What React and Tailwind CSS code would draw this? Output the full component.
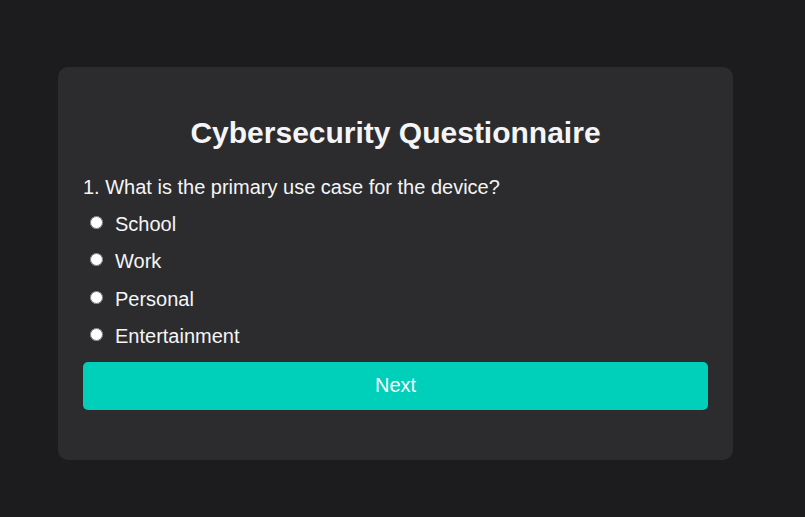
const options = ["School", "Work", "Personal", "Entertainment"];

export default function App() {
  return (
    <div
      className="min-h-screen bg-[#1c1c1e] pt-[67px] pl-[58px]"
      style={{ fontFamily: '"Liberation Sans", Arial, sans-serif' }}
    >
      <div className="w-[675px] rounded-[10px] bg-[#2c2c2e] px-[25px] pt-[25px] pb-[50px] text-[#f5f5f7]">
        <h2 className="mt-[24px] text-center text-[30px] font-bold leading-[34px]">
          Cybersecurity Questionnaire
        </h2>
        <p className="mt-[25px] text-[20px] leading-[24px]">
          1. What is the primary use case for the device?
        </p>
        <div className="mt-[6px] flex flex-col">
          {options.map((o) => (
            <label key={o} className="flex h-[37.5px] items-center text-[20px]">
              <input
                type="radio"
                name="q1"
                value={o}
                className="mb-[3px] ml-[7px] mr-[12px] h-[13px] w-[13px]"
              />
              {o}
            </label>
          ))}
        </div>
        <button className="mt-[7px] h-[48px] w-full rounded-[5px] bg-[#00cfb9] pb-[3px] text-[20px] text-white">
          Next
        </button>
      </div>
    </div>
  );
}
